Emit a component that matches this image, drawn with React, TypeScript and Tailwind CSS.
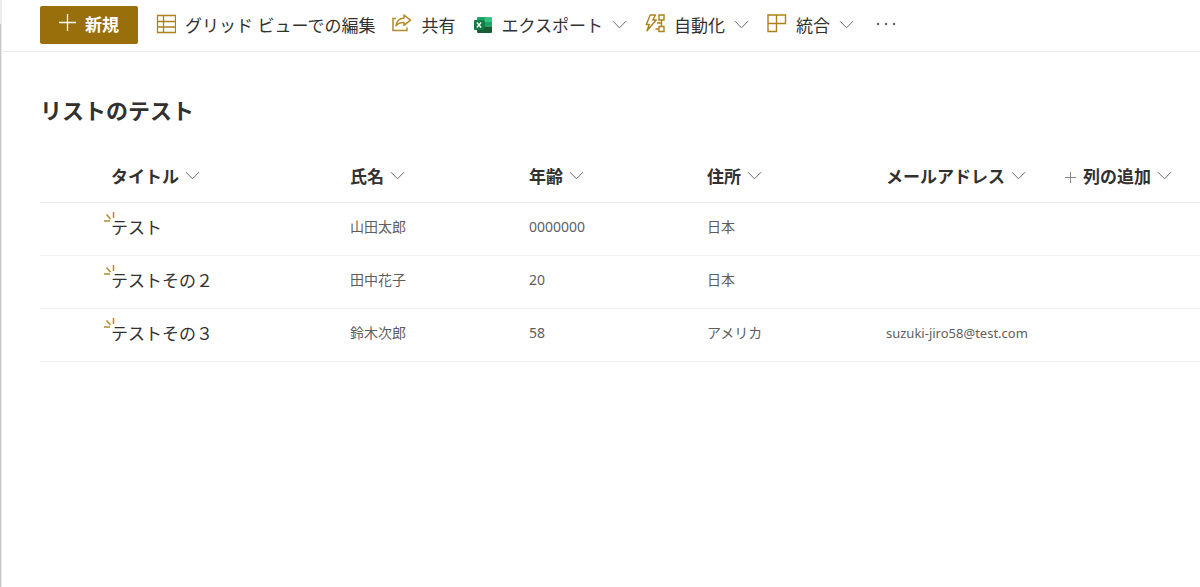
import type { ReactNode } from 'react'

interface Row {
  title: string
  name: string
  age: string
  address: string
  mail: string
}

const rows: Row[] = [
  { title: 'テスト', name: '山田太郎', age: '0000000', address: '日本', mail: '' },
  { title: 'テストその２', name: '田中花子', age: '20', address: '日本', mail: '' },
  { title: 'テストその３', name: '鈴木次郎', age: '58', address: 'アメリカ', mail: 'suzuki-jiro58@test.com' },
]

const columns = ['タイトル', '氏名', '年齢', '住所', 'メールアドレス']

function Chevron() {
  return (
    <svg className="w-4 h-4 shrink-0 text-[#6b6966]" viewBox="0 0 16 16" fill="none" stroke="currentColor">
      <path d="M1 3.2l6.500 6.600 6.500-6.600" />
    </svg>
  )
}

function GridIcon() {
  return (
    <svg className="w-5 h-5 shrink-0" viewBox="0 0 20 20" fill="none" stroke="#ad8118" strokeWidth="1.3">
      <path d="M1.5 1.5h18v17h-18zM7.5 1.5v17M1.5 7.5h18M1.5 13h18" />
    </svg>
  )
}

function ShareIcon() {
  return (
    <svg className="w-5 h-5 shrink-0" viewBox="0 0 20 20" fill="none" stroke="#b58a2b" strokeWidth="1.5">
      <path d="M4 4.500H1v12h14v-3" />
      <path d="M12 1l6.500 5.200L12 11.300V8.500c-3.600-.2-6 .7-8 3.200.5-4.600 3.400-7.400 8-7.800z" strokeLinejoin="round" />
    </svg>
  )
}

function ExcelIcon() {
  return (
    <svg className="w-5 h-5 shrink-0" viewBox="0 0 20 20">
      <path d="M6 3h7v5H5V4q0-1 1-1z" fill="#21a366" />
      <path d="M13 3h6q1 0 1 1v4h-7z" fill="#33c481" />
      <path d="M5 8h8v5H5z" fill="#107c41" />
      <path d="M13 8h7v5h-7z" fill="#21a366" />
      <path d="M5 13h15v5q0 1-1 1H6q-1 0-1-1z" fill="#185c37" />
      <rect x="2" y="6" width="10" height="10" rx="1" fill="#107c41" />
      <path d="M4.900 8.500l4.200 5M9.100 8.500l-4.200 5" stroke="#fff" strokeWidth="1.400" />
    </svg>
  )
}

function FlowIcon() {
  return (
    <svg className="w-5 h-5 shrink-0" viewBox="0 0 20 20" fill="none" stroke="#ad8118" strokeWidth="1.4">
      <path d="M5.200 1h5.300L7.800 6h3.400L2 16.800l2.200-6.300H1.300z" strokeLinejoin="round" />
      <path d="M14 1h5v5h-5zM14 12.500h5v5h-5zM16.500 6v6.500M16.500 9h-4.500M14 15h-3.500" />
    </svg>
  )
}

function IntegrateIcon() {
  return (
    <svg className="w-5 h-5 shrink-0" viewBox="0 0 20 20" fill="none" stroke="#ad8118" strokeWidth="1.4">
      <path d="M1 1h17.500v8.500h-9v8H1zM9.500 1v8.500M1 9.500h8.500" />
    </svg>
  )
}

function NewItemMark() {
  return (
    <svg
      className="absolute -left-2 -top-1 w-3 h-3"
      viewBox="0 0 12 12"
      fill="none"
      stroke="#b58a2b"
      strokeWidth="1.5"
    >
      <path d="M10.500 0v6M3.500 2.500l4 4.500M1 9h6" />
    </svg>
  )
}

interface CommandProps {
  icon: ReactNode
  label: string
  menu?: boolean
}

function Command({ icon, label, menu }: CommandProps) {
  return (
    <button type="button" className="flex items-center gap-[9px] whitespace-nowrap">
      <span className="-mt-1">{icon}</span>
      <span>{label}</span>
      {menu && <Chevron />}
    </button>
  )
}

export default function App() {
  return (
    <div
      lang="ja"
      className="flex min-h-screen bg-white text-[#323130] font-['Noto_Sans','Noto_Sans_CJK_JP',sans-serif]"
    >
      {/* Edge of the side navigation */}
      <div className="w-0.5 shrink-0 pt-6 bg-[#ebebeb]">
        <div className="w-px h-full bg-[#c8c8c8]" />
      </div>

      <div className="flex-1 min-w-0">
        {/* Command bar */}
        <div className="flex items-center gap-[17px] h-[52px] pl-[38px] border-b border-[#eaeaea] text-[17px] leading-6 overflow-hidden">
          <button
            type="button"
            className="flex items-center gap-2 h-[38px] -mt-0.5 mr-px pl-[18px] pr-[19px] rounded-xs bg-[#986f0b] text-white font-bold whitespace-nowrap"
          >
            <svg className="w-[19px] h-[19px] -mt-1" viewBox="0 0 19 19" fill="none" stroke="currentColor" strokeWidth="1.3">
              <path d="M9.500 1v17M1 9.500h17" />
            </svg>
            新規
          </button>
          <Command icon={<GridIcon />} label="グリッド ビューでの編集" />
          <Command icon={<ShareIcon />} label="共有" />
          <Command icon={<ExcelIcon />} label="エクスポート" menu />
          <Command icon={<FlowIcon />} label="自動化" menu />
          <Command icon={<IntegrateIcon />} label="統合" menu />
          <button type="button" aria-label="その他" className="px-1">
            <svg className="w-5 h-5" viewBox="0 0 20 20" fill="#605e5c">
              <circle cx="2" cy="8" r="1.200" />
              <circle cx="10" cy="8" r="1.200" />
              <circle cx="18" cy="8" r="1.200" />
            </svg>
          </button>
        </div>

        <main className="pl-[38px]">
          <h1 className="pt-[42px] text-[22px] leading-8 font-bold">リストのテスト</h1>

          <table className="w-full mt-6 table-fixed border-collapse text-left">
            <colgroup>
              <col className="w-[310px]" />
              <col className="w-[179px]" />
              <col className="w-[178px]" />
              <col className="w-[179px]" />
              <col className="w-[179px]" />
              <col />
            </colgroup>
            <thead>
              <tr className="h-[52px] border-b border-[#edebe9] text-[17px] leading-6">
                {columns.map((label) => (
                  <th key={label} className="p-0 pt-0.5 first:pl-[71px] font-bold">
                    <button type="button" className="flex items-center gap-1.5 whitespace-nowrap">
                      {label}
                      <Chevron />
                    </button>
                  </th>
                ))}
                <th className="p-0 pt-0.5 font-bold">
                  <button type="button" className="flex items-center gap-1.5 whitespace-nowrap">
                    <svg className="w-3 h-3 text-[#8a8886]" viewBox="0 0 12 12" fill="none" stroke="currentColor">
                      <path d="M5.500 1v11M0 6.500h11" />
                    </svg>
                    列の追加
                    <Chevron />
                  </button>
                </th>
              </tr>
            </thead>
            <tbody>
              {rows.map((row) => (
                <tr key={row.title} className="h-[53px] border-b border-[#f3f2f1] text-sm text-[#605e5c]">
                  <td className="p-0 pb-0.5 pl-[71px]">
                    <a href="#" className="relative inline-block text-[17px] leading-6 text-[#323130]">
                      <NewItemMark />
                      {row.title}
                    </a>
                  </td>
                  <td className="p-0 pb-1">{row.name}</td>
                  <td className="p-0 pb-1">{row.age}</td>
                  <td className="p-0 pb-1">{row.address}</td>
                  <td className="p-0 pb-0.5 text-[13px]">{row.mail}</td>
                  <td className="p-0" />
                </tr>
              ))}
            </tbody>
          </table>
        </main>
      </div>
    </div>
  )
}
